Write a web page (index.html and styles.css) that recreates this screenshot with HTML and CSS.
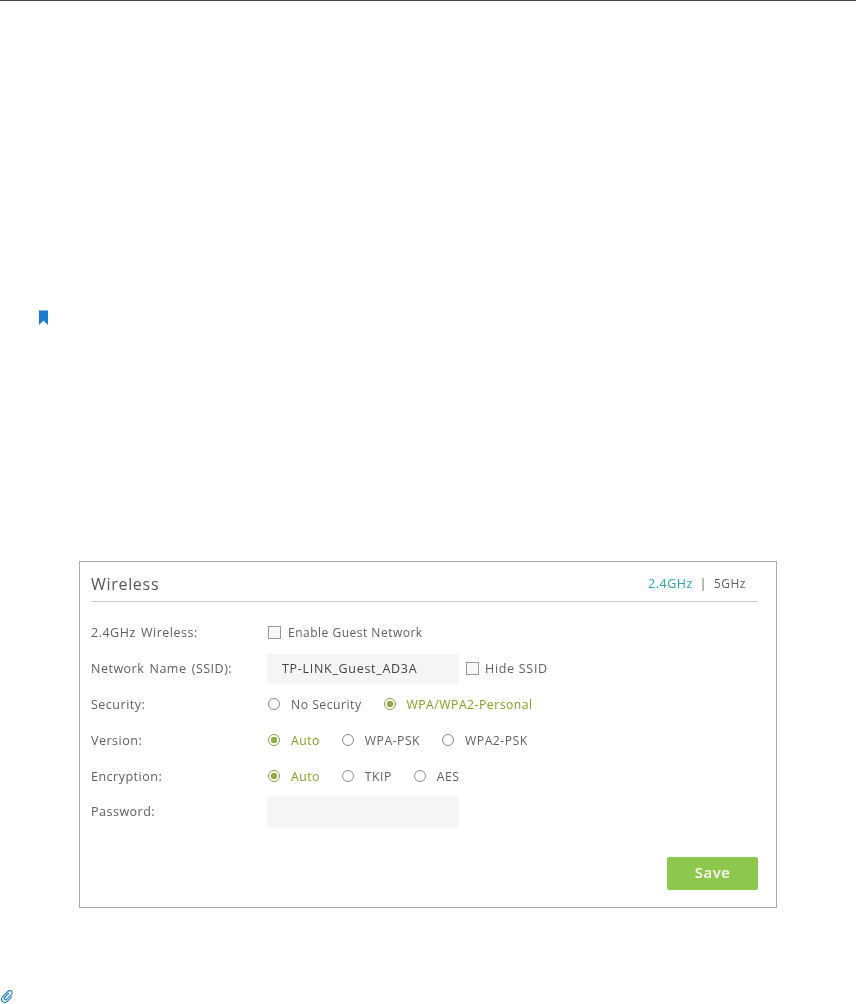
FILE: index.html
```html
<!DOCTYPE html>
<html>
<head>
	<title>Wireless</title>
	<link rel="stylesheet" href="styles.css">
</head>
<body>
	<div class="topline"></div>
	<svg class="bookmark" width="9" height="15" viewBox="0 0 9 15"><path d="M0 1H9V15L4.500 10.500 0 15Z" fill="#1c7ad0"/><path d="M0 0H9V1H0Z" fill="#7fb4e4"/></svg>
	<div class="panel">
		<div class="head">
			<h2>Wireless</h2>
			<div class="bands"><span class="on">2.4GHz</span><span class="sep">|</span><span>5GHz</span></div>
		</div>
		<div class="row">
			<div class="label">2.4GHz Wireless:</div>
			<div class="field">
				<span class="check"></span><span>Enable Guest Network</span>
			</div>
		</div>
		<div class="row">
			<div class="label">Network Name (SSID):</div>
			<div class="field">
				<div class="input">TP-LINK_Guest_AD3A</div>
				<span class="check hide"></span><span class="hide-text">Hide SSID</span>
			</div>
		</div>
		<div class="row">
			<div class="label">Security:</div>
			<div class="field">
				<span class="radio"></span><span class="opt">No Security</span>
				<span class="radio sel"></span><span class="opt green">WPA/WPA2-Personal</span>
			</div>
		</div>
		<div class="row">
			<div class="label">Version:</div>
			<div class="field">
				<span class="radio sel"></span><span class="opt green">Auto</span>
				<span class="radio"></span><span class="opt">WPA-PSK</span>
				<span class="radio"></span><span class="opt">WPA2-PSK</span>
			</div>
		</div>
		<div class="row">
			<div class="label">Encryption:</div>
			<div class="field">
				<span class="radio sel"></span><span class="opt green">Auto</span>
				<span class="radio"></span><span class="opt">TKIP</span>
				<span class="radio"></span><span class="opt">AES</span>
			</div>
		</div>
		<div class="row">
			<div class="label">Password:</div>
			<div class="field">
				<div class="input"></div>
			</div>
		</div>
		<div class="foot">
			<div class="save">Save</div>
		</div>
	</div>
	<svg class="clip" width="13" height="13" viewBox="0 0 14 14"><g transform="rotate(45 7 7)"><path d="M5.500 3.500V10a1.500 1.500 0 0 0 3 0V2.500a2.500 2.500 0 0 0-5 0V11a3.500 3.500 0 0 0 7 0V4" fill="none" stroke="#1c7ad0" stroke-width="1.200" stroke-linecap="round"/></g></svg>
</body>
</html>
```

FILE: styles.css
```css
*{
	margin: 0;
	padding: 0;
	box-sizing: border-box;
}
html, body{
	height: 1004px;
	overflow: hidden;
}
body{
	background: white;
	font-family: "Open Sans", sans-serif;
	font-size: 12px;
	color: #5f5f5f;
	letter-spacing: .5px;
}
.topline{
	height: 1px;
	background: #444;
}
.bookmark{
	display: block;
	margin: 309px 0 0 39px;
}
.panel{
	width: 698px;
	height: 347px;
	margin: 236px 0 0 79px;
	padding: 0 18px 0 11px;
	border: 1px solid #aaa;
	filter: blur(.3px);
}
.head{
	display: flex;
	justify-content: space-between;
	align-items: center;
	height: 40px;
	padding-top: 4px;
	margin-bottom: 13px;
	border-bottom: 1px solid #ccc;
}
h2{
	font-size: 16px;
	font-weight: normal;
	color: #555;
	letter-spacing: .7px;
}
.bands{
	display: flex;
	gap: 7px;
	padding-right: 12px;
}
.bands .on{
	color: #2ba3b5;
	font-size: 12.5px;
}
.row{
	display: flex;
	align-items: center;
	height: 36px;
	margin-top: -.2px;
}
.label{
	width: 176px;
	font-size: 12.5px;
	word-spacing: 1.5px;
}
.field{
	display: flex;
	align-items: center;
}
.check{
	width: 13px;
	height: 13px;
	margin: 0 7px 0 1px;
	border: 1px solid #999;
	background: #f8f8f8;
}
.check.hide{
	margin: 0 6px 0 8px;
}
.hide-text{
	font-size: 12.5px;
	letter-spacing: .7px;
}
.input{
	width: 191px;
	height: 30px;
	line-height: 30px;
	padding-left: 15px;
	background: #f5f5f5;
	box-shadow: 0 0 3px #f5f5f5;
	color: #444;
	font-size: 12.5px;
	letter-spacing: .7px;
}
.radio{
	width: 12px;
	height: 12px;
	margin: 0 11px 0 1px;
	border: 1px solid #888;
	border-radius: 50%;
	background: white;
}
.radio.sel{
	border-color: #8aa04a;
	background: radial-gradient(circle, #8fb040 0, #8fb040 3px, white 3.5px);
}
.opt{
	margin-right: 21px;
	font-size: 12.2px;
}
.green{
	color: #7da11c;
}
.foot{
	display: flex;
	justify-content: flex-end;
	margin-top: 27px;
}
.save{
	width: 91px;
	height: 33px;
	line-height: 31px;
	text-align: center;
	background: #8cc84b;
	color: white;
	font-size: 15px;
	font-weight: 600;
	border-radius: 2px;
}
.clip{
	display: block;
	margin: 82px 0 0 1px;
}
```
